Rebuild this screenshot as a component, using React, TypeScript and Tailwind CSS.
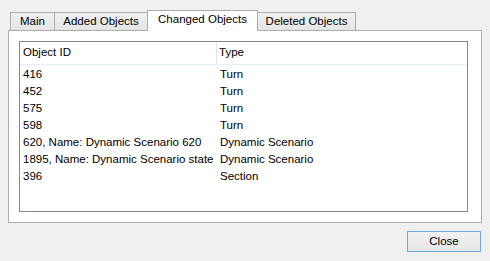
import React from 'react';

const ROWS: { id: string; type: string }[] = [
  { id: '416', type: 'Turn' },
  { id: '452', type: 'Turn' },
  { id: '575', type: 'Turn' },
  { id: '598', type: 'Turn' },
  { id: '620, Name: Dynamic Scenario 620', type: 'Dynamic Scenario' },
  { id: '1895, Name: Dynamic Scenario state', type: 'Dynamic Scenario' },
  { id: '396', type: 'Section' },
];

const TABS = [
  { label: 'Main', w: 'w-[45px]' },
  { label: 'Added Objects', w: 'w-[94px]' },
  { label: 'Changed Objects', w: 'w-[111px]', active: true },
  { label: 'Deleted Objects', w: 'w-[99px]' },
];

export default function App() {
  return (
    <div
      className="w-[490px] h-[261px] bg-[#f0f0f0] pt-[10px] px-[8px] text-[11.5px] text-black overflow-hidden"
      style={{ fontFamily: '"Liberation Sans", Arial, sans-serif' }}
    >
      {/* tab strip */}
      <div className="flex items-end h-[20px] pl-[2px]">
        {TABS.map((t, i) =>
          t.active ? (
            <div
              key={t.label}
              className={`${t.w} h-[21px] -mb-px -ml-px relative z-10 bg-white border border-b-0 border-[#acacac] flex items-center justify-center pb-[2px]`}
            >
              {t.label}
            </div>
          ) : (
            <div
              key={t.label}
              className={`${t.w} h-[18px] ${i > 0 ? '-ml-px' : ''} bg-gradient-to-b from-[#f0f0f0] to-[#e5e5e5] border border-b-0 border-[#acacac] flex items-center justify-center pt-[1px]`}
            >
              {t.label}
            </div>
          )
        )}
      </div>

      {/* tab pane */}
      <div className="h-[193px] bg-white border border-[#acacac] pt-[10px] pl-[10px] pr-[10px]">
        <div className="h-[171px] w-[449px] border border-[#828790] bg-white">
          <div className="flex h-[23px] border-b border-[#e5eef8]">
            <div className="w-[197px] border-r border-[#e5e5e5] pl-[3px] flex items-center">Object ID</div>
            <div className="flex-1 pl-[2px] flex items-center">Type</div>
          </div>
          <div className="pt-[1px]">
            {ROWS.map((r) => (
              <div key={r.id} className="flex h-[17px] items-center">
                <div className="w-[197px] pl-[3px] whitespace-nowrap overflow-hidden">{r.id}</div>
                <div className="flex-1 pl-[3px] whitespace-nowrap">{r.type}</div>
              </div>
            ))}
          </div>
        </div>
      </div>

      {/* footer */}
      <div className="flex justify-end mt-[8px] pr-[1px]">
        <button className="w-[74px] h-[21px] border border-[#6ea6e8] bg-gradient-to-b from-[#f2f2f2] to-[#e6e6e6] flex items-center justify-center">
          Close
        </button>
      </div>
    </div>
  );
}
